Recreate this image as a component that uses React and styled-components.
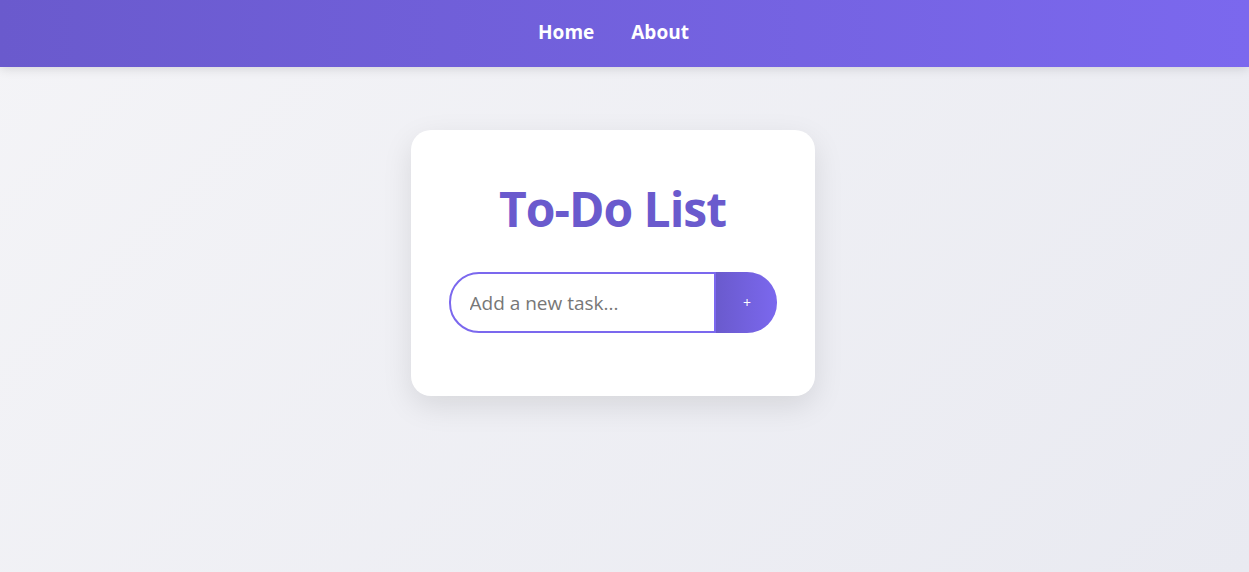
import React, { useState } from "react";
import styled, { createGlobalStyle } from "styled-components";

const GlobalStyle = createGlobalStyle`
  * { box-sizing: border-box; }
  html, body { margin: 0; padding: 0; }
  body {
    font-family: "Open Sans", "Noto Sans", sans-serif;
    min-height: 100vh;
    background: linear-gradient(135deg, #f4f4f7 0%, #e9eaf1 100%);
  }
`;

export default function App() {
  const [task, setTask] = useState("");

  return (
    <>
      <GlobalStyle />
      <Page>
        <Navbar>
          <NavLink href="#">Home</NavLink>
          <NavLink href="#">About</NavLink>
        </Navbar>
        <Main>
          <Card>
            <Title>To-Do List</Title>
            <InputRow>
              <TaskInput
                placeholder="Add a new task..."
                value={task}
                onChange={(e) => setTask(e.target.value)}
              />
              <AddButton>+</AddButton>
            </InputRow>
          </Card>
        </Main>
      </Page>
    </>
  );
}

const Page = styled.div`
  min-height: 100vh;
  display: flex;
  flex-direction: column;
`;

const Navbar = styled.nav`
  height: 67px;
  display: flex;
  align-items: center;
  justify-content: center;
  gap: 37px;
  padding-right: 22px;
  background: linear-gradient(90deg, #6a5acd 0%, #7b68ee 100%);
  box-shadow: 0 2px 10px rgba(0, 0, 0, 0.12);
`;

const NavLink = styled.a`
  color: #fff;
  text-decoration: none;
  font-weight: 700;
  font-size: 19px;
  margin-top: -3px;
`;

const Main = styled.main`
  display: flex;
  justify-content: center;
  padding-top: 63px;
  padding-right: 24px;
`;

const Card = styled.div`
  width: 404px;
  height: 266px;
  background: #fff;
  border-radius: 20px;
  box-shadow: 0 10px 30px rgba(0, 0, 0, 0.1);
  padding: 49px 38px 0;
  display: flex;
  flex-direction: column;
  align-items: center;
`;

const Title = styled.h1`
  margin: 0 0 33px;
  color: #6a5acd;
  font-size: 48px;
  font-weight: 700;
  line-height: 60px;
  letter-spacing: -1px;
`;

const InputRow = styled.div`
  display: flex;
  width: 100%;
  height: 61px;
`;

const TaskInput = styled.input`
  flex: 1;
  min-width: 0;
  height: 100%;
  border: 2px solid #7b68ee;
  border-radius: 30px 0 0 30px;
  padding: 0 19px;
  font-family: inherit;
  font-size: 19px;
  color: #333;
  outline: none;
  &::placeholder {
    color: #777;
  }
`;

const AddButton = styled.button`
  width: 61px;
  height: 100%;
  border: none;
  border-radius: 0 30px 30px 0;
  background: linear-gradient(90deg, #6a5acd 0%, #7b68ee 100%);
  color: #fff;
  font-family: inherit;
  font-size: 14px;
  padding: 0 0 0 2px;
  cursor: pointer;
`;
